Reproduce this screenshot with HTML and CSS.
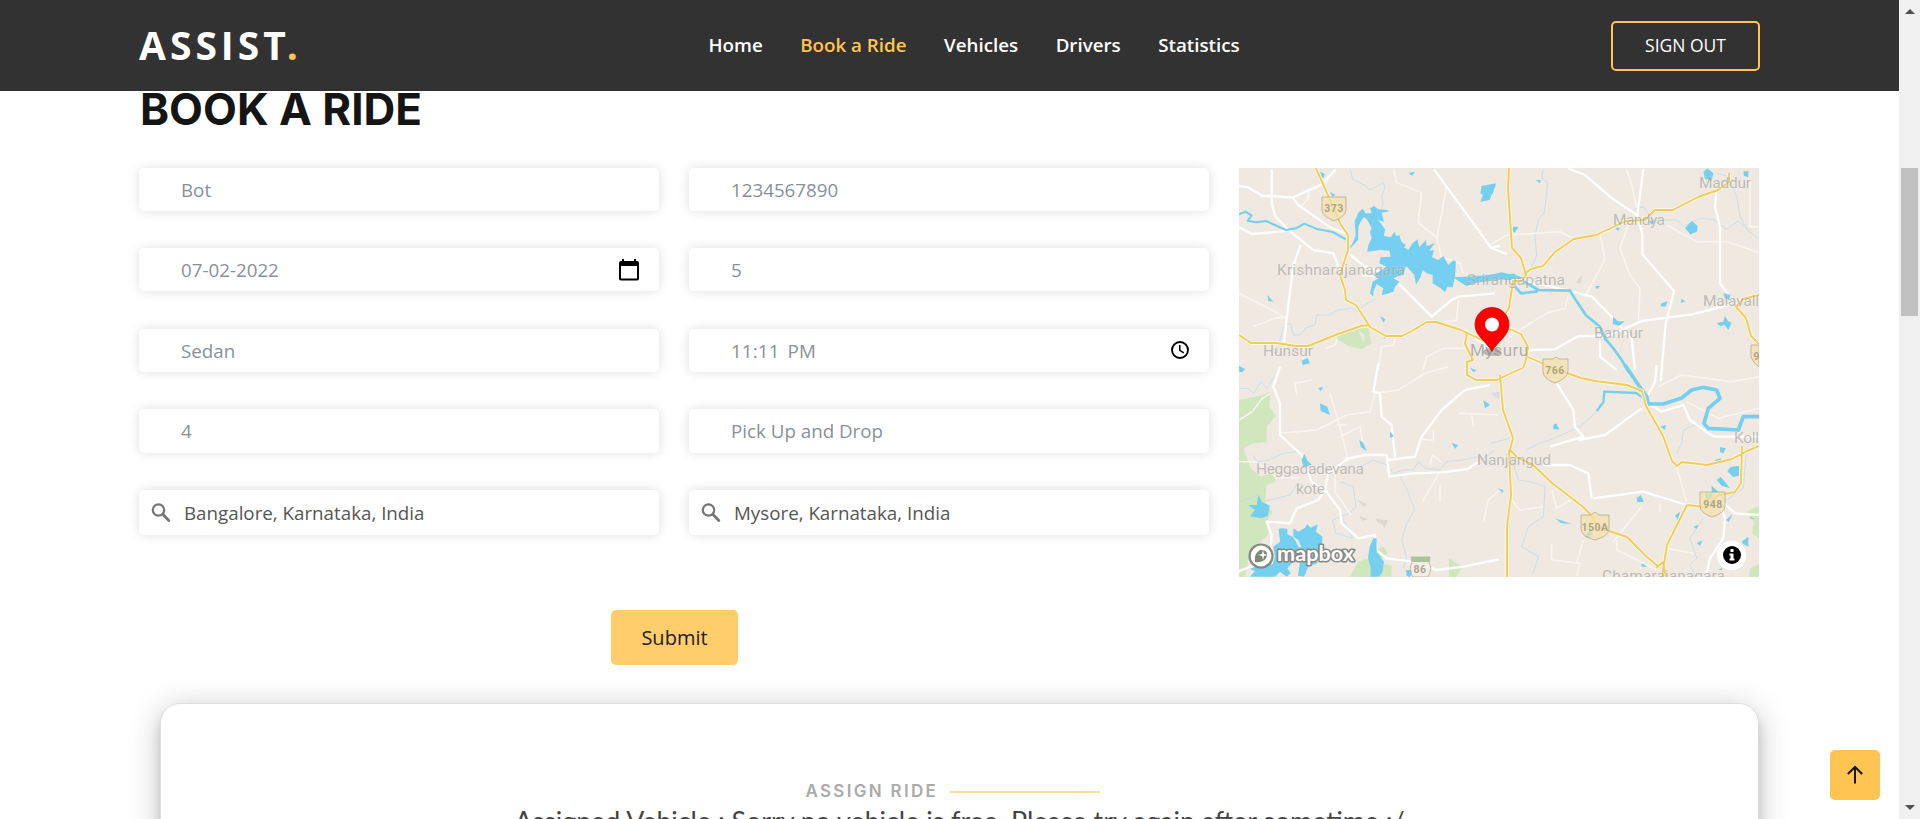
FILE: index.html
```
<!DOCTYPE html>
<html lang="en">
<head>
<meta charset="utf-8">
<title>Assist</title>
<link rel="stylesheet" href="styles.css">
</head>
<body>
<div class="window">
<div class="page">
  <header class="header">
    <a class="logo">ASSIST<span>.</span></a>
    <nav class="nav"><a>Home</a><a class="active">Book a Ride</a><a>Vehicles</a><a>Drivers</a><a>Statistics</a></nav>
    <a class="signout">SIGN OUT</a>
  </header>
  <main class="container">
    <h1 class="title">BOOK A RIDE</h1>
    <div class="booking">
      <div class="fields">
        <div class="field">Bot</div><div class="field">1234567890</div>
        <div class="field">07-02-2022
          <svg class="calendar" width="20" height="22" viewBox="0 0 20 22"><path fill="#000" fill-rule="evenodd" d="M3 0h2v2h10V0h2v2h1a2 2 0 0 1 2 2v15.500a2 2 0 0 1-2 2H2a2 2 0 0 1-2-2V4a2 2 0 0 1 2-2h1zM2 7v12.500h16V7z"/></svg></div>
        <div class="field">5</div>
        <div class="field">Sedan</div>
        <div class="field time">11:11 PM
          <svg class="clock" width="20" height="20" viewBox="0 0 20 20" fill="none" stroke="#000"><circle cx="10" cy="10" r="8" stroke-width="1.900"/><path stroke-width="1.500" d="M9.800 5v5.300l4 2.600"/></svg></div>
        <div class="field">4</div><div class="field">Pick Up and Drop</div>
        <div class="field search"><svg width="20" height="20" viewBox="0 0 20 20" fill="none" stroke="#757575"><circle cx="7.500" cy="7" r="5.700" stroke-width="2.200"/><path stroke-width="2.800" stroke-linecap="round" d="M12 11.500l5.800 6"/></svg>Bangalore, Karnataka, India</div>
        <div class="field search"><svg width="20" height="20" viewBox="0 0 20 20" fill="none" stroke="#757575"><circle cx="7.500" cy="7" r="5.700" stroke-width="2.200"/><path stroke-width="2.800" stroke-linecap="round" d="M12 11.500l5.800 6"/></svg>Mysore, Karnataka, India</div>
      </div>
      <svg class="map" width="520" height="409" viewBox="0 0 520 409" fill="none" stroke-linejoin="round">
        <rect width="520" height="409" fill="#efe9e1"/>
        <!-- parks -->
        <g fill="#d0e6bd">
          <path transform="translate(-9 -8) scale(.33333)" d="M320 530L370 506 415 503 424 550 395 568 355 557 325 540zM385 510l15 40 4-25z" fill-rule="evenodd"/>
          <path transform="translate(-9 197) scale(.33333)" d="M27 105L100 90 122 80 118 125 138 152 110 185 110 232 70 235 40 250 62 310 90 335 130 325 137 350 110 360 105 410 127 440 110 470 115 510 60 560 45 635 27 635zM445 550l15-5 13 20-15 15-15-10zM385 590l20-8 80 20v33H360zM657 580l40 25-20 33h-20z"/>
          <path transform="translate(251 197) scale(.33333)" d="M770 440l37-18v98l-22-15 8-35zM780 610l27-14v40h-30z"/>
        </g>
        <g fill="#dfd8cf"><path d="M118 332l10 4-3 3zM137 350l7 2 5 0-3 8-3-4-5-2zM120 348l9 3-6 2z"/><path d="M340 110l3-2-1 7h-5z"/></g>
        <g fill="#d9dbe8"><path d="M252 225l12-2v7h-7z"/></g>
        <!-- streams -->
        <g stroke="#c6dbe8" stroke-width="2.600">
          <g transform="translate(-9 -8) scale(.33333)"><path d="M360 28l8 30 40 20 10 12 42-22 5 15-10 25 5 25-8 18M162 495l20-5 8 35 20 0 20-22 25-8 5-30 40 0 25-15 40-5 15 10 25-20 35-20M160 500l-20 80"/></g>
          <g transform="translate(251 -8) scale(.33333)"><path d="M160 28l-5 25 18 15-10 90-18 20-10 50 5 60-20 40M430 150l30-10 30 40 70 0 20 20 50-25 40 3 40 30 35-25 20 20 42 35M680 40l35 10 25 60 10 60 30 50"/></g>
          <g transform="translate(-9 197) scale(.33333)"><path d="M27 70h25l20 15 20-35 20 20 20-35M70 270l10 20 35-5 45-20 40-5M27 410l60-20M100 410l80-20 20-30 20 0M480 310l10 15 30-10h30l15-25 20 20 45 5 20-25 50-5 40-10 15 10 40-30M510 335l20 35 10 30 15 35-25 40-15 50 15 50-10 35M330 350l40 15 8 60-20 20-50 20 10 40 50 15-30-60M380 310l50-25 40 15"/></g>
          <g transform="translate(251 197) scale(.33333)"><path d="M0 235l60-15M60 265l25 80 35 5 45 15-5 90-45 30-20 60 50 30-15 50M110 255l35-20 35-10 90-40 50-45M560 265l15-30 5-40 35-15M770 250l-10 120-65 45M640 460l-40 60 20 60-20 20 20 40"/></g>
        </g>
        <!-- minor roads -->
        <g stroke="#f9f6f1" stroke-width="4.500">
          <g transform="translate(-9 -8) scale(.33333)"><path d="M240 85l-10 35M243 105l-30 35M490 28l10 40 75 30-10 90 55 45 15 60M650 80l-15 80-15 75M70 500l65-25 35-5M27 400l100 50 40 25M285 565l30-10 5-15M495 535l-5 20-35 5-10 70M580 630l10-40 50-25h65M630 290l60 20 10 30M685 420l-5 60-50 8"/></g>
          <g transform="translate(251 -8) scale(.33333)"><path d="M0 255l50-30 160-10 40 20M330 225l15 70-35 70-25 45M410 28l15 45 15 70M415 195l-25 70 30 80 30 40-5 100-15 10M530 195l90 50 90 0 60 20 37 13M780 60v140h25M60 530l60-40 50-30 55-15 10-40"/></g>
          <g transform="translate(-9 197) scale(.33333)"><path d="M150 205l110-10 90-45 70-10 15-55M300 85l35 120 20 85M330 215l60-30 10 60M320 180h30M27 165l40-25 30-40 25-15M27 290l50 0 60 45 70 5M575 220l15 5h20l0-30M600 300l8-30 25 20M630 320l-30 50-22 40M630 360v50M685 145l120 5M725 150l5 35M315 330v50l48 70M760 470l15-65 40-35M435 85l70-10 80-50 70-20M245 45l-50 10 5 35"/></g>
          <g transform="translate(251 197) scale(.33333)"><path d="M505 65l70-35 150 20 82-15M590 110l95 50 122-30M555 290l35 120M60 400l30 35 70-10M185 535v50l85 10-10 38M280 525l-20 70M370 530l85-105M380 525v30l120 60M510 415v25M185 375l15 55 50-30M530 550l80 15"/></g>
        </g>
        <!-- main white roads -->
        <g stroke="#fff" stroke-width="7">
          <g transform="translate(-9 -8) scale(.33333)"><path d="M27 78l30 5 40 25 30 0 60 5 90-40 40-45M125 28v100l10 40 40 42 75 60 60 10 20 50M190 115l15 20 100 70 45 15M27 202l40 20 110-10M212 255l-22 60-20 160-8 75M355 280l50 40 80 30 60 60 60 60 60-50 20-10 110-10M395 345l90 8M612 28l40 55 95 130 35 50 28-5M705 510l80 60"/></g>
          <g transform="translate(251 -8) scale(.33333)"><path d="M235 25l50 20 75 65 80 55M460 28l-18 135 15 60v60l35 40 60 70-25 100-15 170M680 85l-5 55 15 60v170l30 40M0 262l50 20M105 365l80 15 120 30 50 50 70 75 10 95M115 570l80-2 70-40 90 0 100-45 150-20 120-30M330 540v50l50 40"/></g>
          <g transform="translate(-9 197) scale(.33333)"><path d="M150 5l-20 60 20 50v95l65 60 30 80 40 25 45 60 5 40 50 45 50-10 5 45 30 25 80 10 70 25 80-10 107-22M285 375l-20 30-65 25-20 45-70-5 15 40-5 60-35 25-78 32M285 375l10-50 60-45 50-10h65l5 15 80-10 20-60 60-80 70-60 75-15M470 275l8 60 70-10 90-3 75-10 30-20M445 -5l-15 85 20 5 5 70 30 25 10 95"/></g>
          <g transform="translate(251 197) scale(.33333)"><path d="M200 55l50 80 5 50 25 30-100 30M265 225l80-15 110-80M475 115l40 25 65-20 20 45 70 50h137M500 0l-5 50-20 40M310 400l150-20 130 40M685 400l50 45 72 5M695 430l10 30-5 60-40 60-10 45M160 300h80l55 25 10 75"/></g>
        </g>
        <!-- water -->
        <g fill="#75cff0">
          <g transform="translate(-9 -8) scale(.33333)">
            <path d="M352 275L350 240 358 240 362 262 372 240 377 225 374 185 384 160 398 146 406 160 425 160 420 145 432 138 445 148 470 150 478 154 455 158 462 185 445 180 465 208 462 228 482 232 494 215 498 228 508 225 514 245 528 255 522 262 535 270 548 250 562 238 568 262 588 240 590 258 614 250 598 272 612 270 606 292 625 300 640 288 655 315 670 300 678 305 675 350 668 382 652 380 645 397 632 385 608 370 608 345 590 340 578 330 572 350 558 374 553 345 535 325 528 318 520 345 500 350 490 355 508 365 495 380 490 395 470 402 455 405 460 385 440 372 430 395 430 410 420 400 428 365 445 355 430 345 455 330 470 320 448 310 452 292 482 290 478 272 450 270 412 275 415 255 425 235 420 215 425 205 412 180 402 170 392 185 385 200 384 240 370 255z"/>
            <path d="M755 78l42-8-18 50-28 5 8-20-8-5zM270 35l15 8-5 12-12-10zM535 40l20-5-8 12zM300 96l16 8-8 8zM112 405l18 20-15-2zM450 468l16 10-5 10zM460 522l15 5-13 10zM215 602l18-8 7 16-22 5zM670 352l40-2 98-8v18l-70 8-28 10-20-12z"/>
          </g>
          <g transform="translate(251 -8) scale(.33333)"><path d="M0 345l35-8 60 14-30 10-65-5zM640 35l12-10 18 15-5 22-20-6zM760 34l16 0-2 18-12-5zM585 205l20-22 18 14-2 18-20 8zM370 470l14 14h20l-16 13-20-5zM680 490l20-5 5-18 8 15 12 6-10 22-12-16-12 5zM0 85l18-14-10 30-8 8zM70 200l16 0-12 18-8-8zM138 60l14 0-3 10zM515 430l18-6-7 16-15-2zM575 416l10 8-12 6zM700 400l22 4-5 15-12-4zM315 378l16 0-10 10zM475 182l20 0-10 12zM375 203h15l-6 10z"/></g>
          <g transform="translate(-9 197) scale(.33333)"><path d="M27 2l18 10-8 10-10-2zM265 70l14-5-6 14zM270 115l22 10 8 25-28-12zM388 225l12 8 10 26-18-14zM480 200l12 14-12 5zM215 285l8-18 10 20 12 12-25 8zM665 233l20 8-10 10zM760 105l20 15-15 10zM720 8l20 8-10 6zM55 420l25 0 5-30 12 22 22 10-5 30-20 8-34-6 15-20zM146 492L156 490 172 492 172 508 188 515 198 530 205 545 215 548 205 525 190 515 190 490 205 500 225 488 232 478 242 488 263 478 258 500 278 515 275 545 262 565 262 595 235 605 222 635 204 632 210 590 195 585 172 610 182 625 170 635 150 620 135 635 60 635 75 618 60 612 90 600 128 598 135 575 130 545 150 530zM430 520l10 0 0 40 22 30-5 30-10 15-25 0 0-25-8-30 5-35zM528 615h20l-8 22-10-5z"/></g>
          <g transform="translate(251 197) scale(.33333)"><path d="M190 180l8-5 10 18-18 0zM510 185l18-6-3 16zM690 246l18 4-8 15-10-4zM675 285l18-5-2 15-12-2zM712 318l10-12 25-4v30l-18 4zM680 345l12-10 28 35-25-8zM665 362l20 18-20 6zM645 385l20 0 5 15-20 5zM440 400l12-10 10 20-20 2zM195 460l50 18-32-4zM25 370l15 5-3 10zM555 452l15-12-6 25zM708 465l20-18-12 24zM620 535l18-10-8 17zM610 485l15-5-5 12zM455 595l18 10-18 0zM755 530l20-15v30l-15-8zM685 613l12-4-3 7zM285 515l15-20 8 10-12 15zM778 455l17 7h-12z"/></g>
        </g>
        <g stroke="#75cff0">
          <path transform="translate(-9 -8) scale(.33333)" stroke-width="6" d="M27 163l20-8 18 12-12 15 25 5 30-4 60 27 30-5 25-14 35 15 50 10 40 22"/>
          <path transform="translate(251 -8) scale(.33333)" stroke-width="8" d="M0 352l70-7 50 30 25 15 95 2 20 32 28 42 42 34 15 35 25 30 25 35 20 35M75 380l18 20 50-6"/>
          <path transform="translate(251 197) scale(.33333)" stroke-width="11" d="M405 0l30 45 35 50 5 22 45 0 55-18 30-24 35-8 40 8 10 25-35 30-13 45 13 15 90 5 15-40h47"/>
          <path transform="translate(251 197) scale(.33333)" stroke-width="7" d="M458 98l-20-14-95-4-3 32-20 26"/>
        </g>
        <!-- highways: pale casing and yellow core -->
        <g stroke="#fff7dc" stroke-width="3.800"><use href="#highways"/></g>
        <g stroke="#efcc61" stroke-width="1.900"><use href="#highways"/></g>
        <defs><g id="highways">
          <path d="M77 0l25 57 7 10 0 15-8 25 5 15 1 10 10 5 14 22 16 9h16l10-5 15-9h9l25 8 21 10 1-17 12-3M0 167l12 8 25 0 20 3 12 0 30-12 23-8 8-1M228 165l-2 11 8 16-6 2 0 13 9 5 21 0 12-6 14-6 3-8 2-13-7-13-16-7M270 0l-1 20 4 60 9 10 5 17-4 6h-9l-4 27-10 15M285 106l7-5 12-3 12-14 19-13 22-4 30-14 19-1 10-10h18l25-13 20-7 11-8v-9M289 189l25 11 28 10 14 3 32 4 15 6 4 15 17 30 9 25 5 5 5-4 25 3 25-6 15-8 19-8M261 207l3 35 10 28-3 12 8 8 14 6 20 19 30 23 11 11 4 10 30 10 20 20 12 10M270 282l2 46-4 30V409M448 337l-20 40-5 32M448 337l16 2 16-12 16-3 6-9 1-37M520 127l-16 4-7 8 10 11 5 18 8 8M417 400l7-6 3 15"/>
        </g></defs>
        <!-- road shields -->
        <g stroke="#b8ab91" stroke-opacity=".8" stroke-width="1" fill="#f3e1a9" fill-opacity=".72">
          <path d="M83 29h24v13q0 6-12 11-12-5-12-11z"/>
          <path d="M304 191h10l3-2 3 2h9v12q0 7-13 12-12-4-12-12zM342 347h10l4-3 4 3h10v14q0 7-14 11-14-4-14-11zM461 324h25v14q0 7-13 11-12-4-12-11zM520 177h-8v12q2 6 8 10z"/>
          <path fill="#f2eee8" d="M172 389h19l-1 6q4 5-1 14h-15q-5-8-1-14z"/>
        </g>
        <path fill="#a8c49d" d="M173 389h18v5h-18z"/>
        <g class="shield-text"><text x="95" y="44">373</text><text x="316" y="206">766</text><text x="356" y="363">150A</text><text x="474" y="340">948</text><text x="181" y="405">86</text><text x="517.500" y="192">9</text></g>
        <g class="places">
          <text x="38" y="107" textLength="128">Krishnarajanagara</text><text x="228" y="117" textLength="98">Srirangapatna</text><text x="24" y="188" textLength="50">Hunsur</text><text x="374" y="57" textLength="52">Mandya</text><text x="460" y="20" textLength="52">Maddur</text><text x="464" y="138" textLength="56">Malavall</text><text x="355" y="170" textLength="49">Bannur</text><text x="17" y="306" textLength="108">Heggadadevana</text><text x="57" y="326" textLength="29">kote</text><text x="238" y="297" textLength="74">Nanjangud</text><text x="495" y="275" textLength="25">Koll</text><text x="363" y="413" textLength="123">Chamarajanagara</text><text class="city" x="231" y="188" textLength="58">Mysuru</text>
        </g>
        <ellipse cx="253" cy="184" rx="9" ry="4" fill="#777" opacity=".45"/>
        <path fill="#fe0000" stroke="#b90000" stroke-width=".7" d="M253 183.500C248 174 236 168 236 156.500a17 17 0 0 1 34 0C270 168 258 174 253 183.500z"/><circle cx="253" cy="156.500" r="7" fill="#fff"/>
        <g><circle cx="22" cy="388" r="11.500" fill="#fff" stroke="#858980" stroke-width="2.200"/><path fill="#7c8975" d="M16 394q-1-9 5-12 8-1 7 6-2 7-12 6z"/><path fill="#fff" d="M24 382l1 4 4 1-4 1-1 4-1-4-4-1 4-1z"/><text class="mapbox" x="38" y="393" textLength="77" lengthAdjust="spacingAndGlyphs">mapbox</text></g>
        <rect x="478" y="373" width="29" height="29" rx="14" fill="#fff"/><circle cx="493" cy="387" r="9" fill="#000"/><path fill="#fff" d="M491.500 381h3v3h-3zM490.500 385.500h4v5h1v2h-5v-2h1v-3h-1z"/>
      </svg>
    </div>
    <div class="actions"><button class="submit">Submit</button></div>
    <section class="card"><p class="eyebrow"><span>ASSIGN RIDE</span></p><h2 class="status">Assigned Vehicle : Sorry no vehicle is free. Please try again after sometime :/</h2></section>
  </main>
  <a class="top"><svg width="18" height="20" viewBox="0 0 18 20" fill="none" stroke="#151515" stroke-width="2"><path d="M9 18.500V2M1.800 9L9 2l7.200 7"/></svg></a>
</div>
<aside class="scrollbar"><i class="up"></i><i class="thumb"></i><i class="down"></i></aside>
</div>
</body>
</html>
```
FILE: styles.css
```
* { box-sizing: border-box; }
body { margin: 0; background: #fff; color: #444; font-family: "Open Sans", sans-serif; overflow: hidden; }
.window { display: flex; height: 819px; overflow: hidden; }
.page { width: 1899px; height: 819px; overflow: hidden; flex: none; position: relative; }
.header { height: 91px; padding: 0 139px; background: #323232; display: grid; grid-template-columns: 569.500px 1fr auto; align-items: center; }
.logo { color: #fff; font-size: 39px; font-weight: 700; letter-spacing: 4px; line-height: 1; padding-bottom: 2px; }
.logo span { color: #ffc451; margin-left: -3px; }
.nav { display: flex; gap: 37.500px; padding-bottom: 2px; color: #fff; font-size: 18.750px; font-weight: 600; }
.nav .active { color: #ffc451; }
.signout { width: 149px; height: 50px; border: 2px solid #ffc451; border-radius: 5px; color: #fff; font-size: 17.500px; text-align: center; line-height: 45px; }
.container { width: 1620px; margin-left: 139px; }
.title { margin: 0; padding-left: 1px; height: 77px; font-family: Inter, sans-serif; font-size: 44px; line-height: 36px; font-weight: 700; color: #151515; }
.booking { display: flex; gap: 30px; height: 409px; }
.fields { width: 1070px; display: grid; grid-template-columns: 520px 520px; column-gap: 30px; grid-template-rows: 43px 43px 43px 44px 45px; row-gap: 37.3px; align-content: start; }
.field { background: #fff; border-radius: 5px; box-shadow: 0 0 12px rgba(0,0,0,.13); padding-left: 42px; display: flex; align-items: center; font-size: 18.750px; color: #8a9097; white-space: pre-line; }
.field svg { flex: none; }
.calendar { margin-left: auto; margin-right: 20px; }
.clock { margin-left: auto; margin-right: 19px; }
.time { word-spacing: 3px; letter-spacing: .15px; }
.search { padding-left: 12px; gap: 13px; color: #555; }
.map { display: block; flex: none; }
.places { fill: #9b9895; fill-opacity: .62; font: 15.500px Roboto, sans-serif; stroke: #fff; stroke-opacity: .25; stroke-width: 1px; paint-order: stroke; }
.city { font-size: 17px; fill: #858585; }
.shield-text { fill: #a1987f; fill-opacity: .85; font: 700 10.500px Roboto, sans-serif; text-anchor: middle; letter-spacing: .5px; }
.mapbox { fill: #fff; stroke: #868780; stroke-width: 3px; paint-order: stroke; font: 700 20px Lato, sans-serif; }
.actions { padding: 33px 0 38px 472px; }
.submit { display: block; width: 127px; height: 55px; padding: 0; border: 0; border-radius: 5px; background: #ffcd6b; color: #212121; font: 20px "Open Sans", sans-serif; }
.card { height: 300px; margin-left: 21px; padding-top: 77px; border: 1px solid #dedede; border-radius: 20px; background: #fff; box-shadow: 0 5px 32px rgba(0,0,0,.22), 0 10px 12px rgba(0,0,0,.14); }
.eyebrow { margin: 0 0 0 644.500px; height: 21px; display: flex; align-items: center; gap: 12px; font: 600 17px/21px Inter, sans-serif; letter-spacing: 2.300px; color: #aaa; }
.eyebrow::after { content: ""; width: 150px; height: 2px; background: #ffdc97; }
.status { margin: 2px 0 0; text-align: center; font: 400 26.800px/34px Lato, sans-serif; color: #444; white-space: nowrap; }
.top { position: absolute; right: 19px; bottom: 19px; width: 50px; height: 50px; border-radius: 5px; background: #ffc451; display: grid; place-items: center; }
.scrollbar { width: 21px; height: 819px; background: #f0f0f0; display: flex; flex-direction: column; align-items: center; }
.scrollbar i { display: block; }
.up { margin-top: 9px; border: 5px solid transparent; border-top: 0; border-bottom-color: #505050; }
.thumb { margin-top: 154px; width: 17px; height: 148px; background: #c1c1c1; }
.down { margin-top: auto; margin-bottom: 9px; border: 5px solid transparent; border-bottom: 0; border-top-color: #505050; }
```
